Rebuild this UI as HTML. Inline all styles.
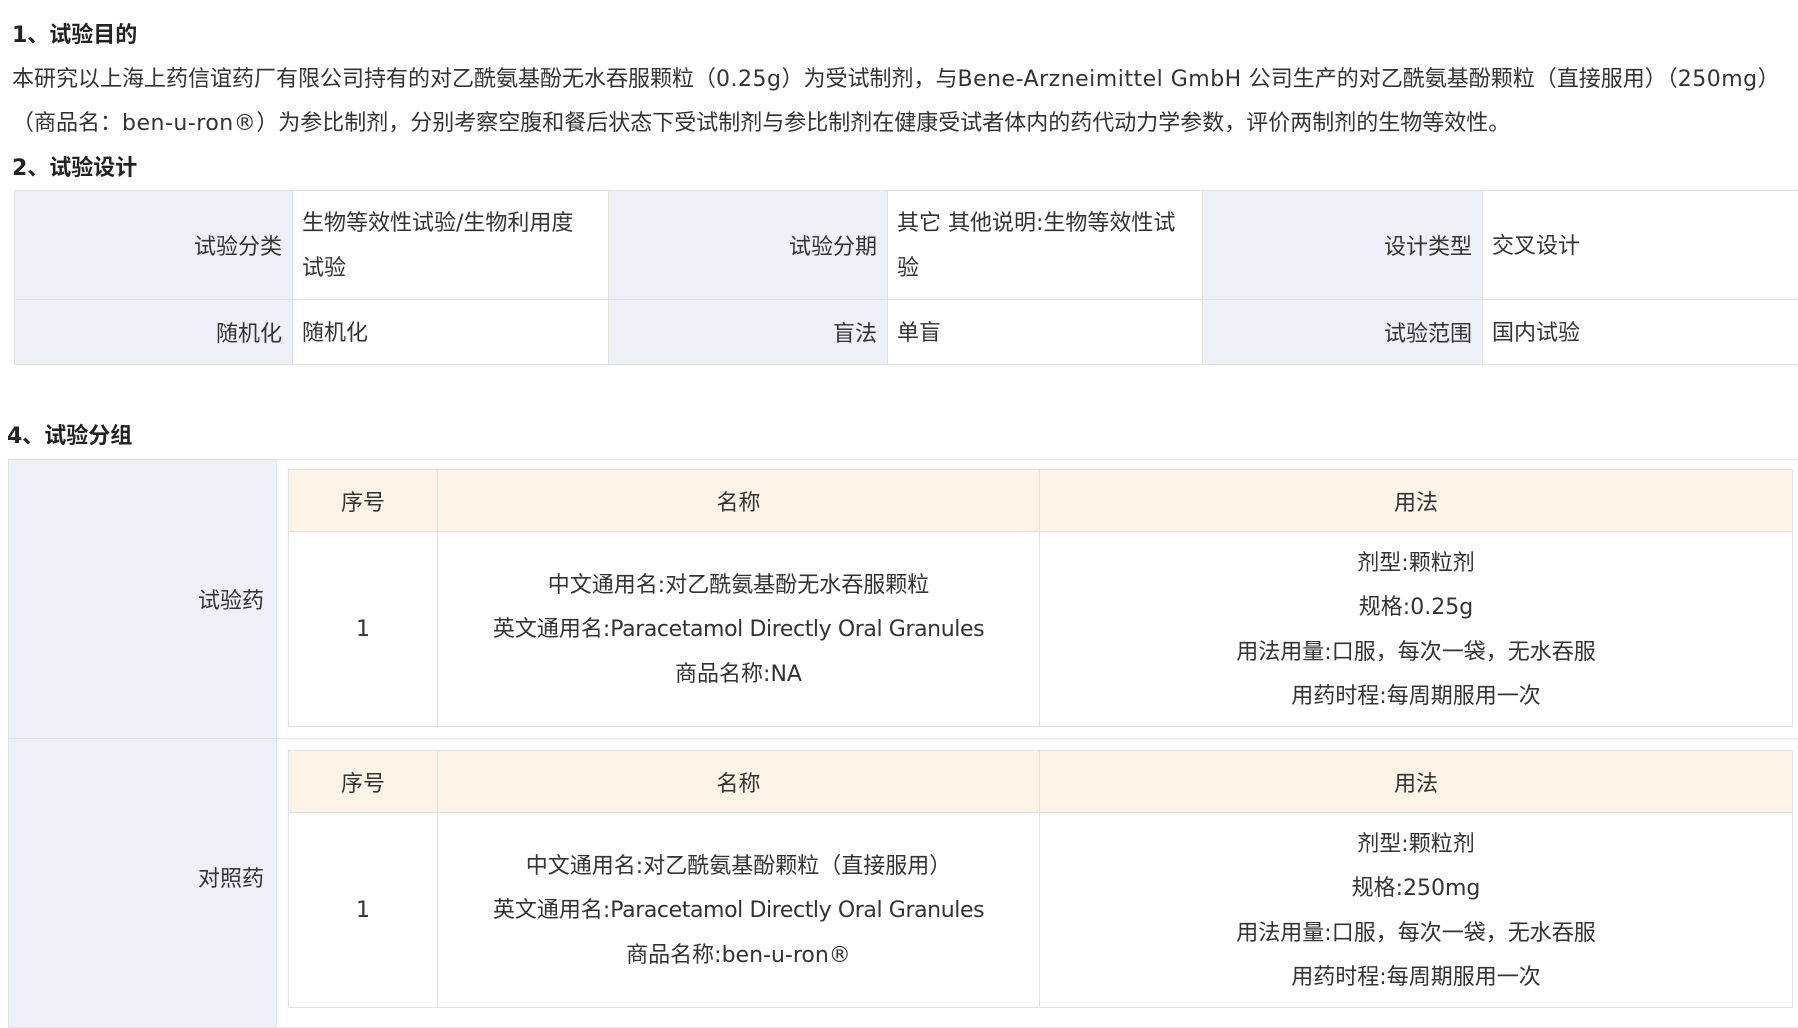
<!DOCTYPE html>
<html><head><meta charset="utf-8"><style>
*{margin:0;padding:0;box-sizing:border-box}
body{width:1798px;height:1018px;background:#fff;font-family:"DejaVu Sans","Noto Sans CJK SC",sans-serif;font-size:22px;color:#333;position:relative;overflow:hidden}
.a{position:absolute}
.h{font-weight:bold;color:#222;font-size:22px;line-height:26px}
.p{white-space:nowrap;line-height:26px}
.l{letter-spacing:0.5px}
.t{letter-spacing:-0.4px}
.c{position:absolute;display:flex;align-items:center;border:1px solid #e2e2e2}
.lab{background:#eef0f8;justify-content:flex-end;padding-right:10px;text-align:right}
.val{background:#fff;padding-left:9px;line-height:45px;padding-top:2px}
.hd{background:#fdf3e6;justify-content:center}
.bd{background:#fff;justify-content:center;text-align:center;line-height:44.5px;padding-top:3px}
</style></head><body>
<div class="a h" style="left:12px;top:23px">1、试验目的</div>
<div class="a p" style="left:12px;top:67px">本研究以上海上药信谊药厂有限公司持有的对乙酰氨基酚无水吞服颗粒（<span class="l">0.25g</span>）为受试制剂，与<span class="l">Bene-Arzneimittel GmbH</span> 公司生产的对乙酰氨基酚颗粒（直接服用）（<span class="l">250mg</span>）</div>
<div class="a p" style="left:12px;top:111px">（商品名：<span class="l">ben-u-ron®</span>）为参比制剂，分别考察空腹和餐后状态下受试制剂与参比制剂在健康受试者体内的药代动力学参数，评价两制剂的生物等效性。</div>
<div class="a h" style="left:12px;top:156px">2、试验设计</div>

<div class="c lab" style="left:14px;top:190px;width:279px;height:110px">试验分类</div>
<div class="c val" style="left:292px;top:190px;width:317px;height:110px">生物等效性试验/生物利用度<br>试验</div>
<div class="c lab" style="left:608px;top:190px;width:280px;height:110px">试验分期</div>
<div class="c val" style="left:887px;top:190px;width:316px;height:110px">其它 其他说明:生物等效性试<br>验</div>
<div class="c lab" style="left:1202px;top:190px;width:281px;height:110px">设计类型</div>
<div class="c val" style="left:1482px;top:190px;width:320px;height:110px">交叉设计</div>
<div class="c lab" style="left:14px;top:299px;width:279px;height:66px">随机化</div>
<div class="c val" style="left:292px;top:299px;width:317px;height:66px">随机化</div>
<div class="c lab" style="left:608px;top:299px;width:280px;height:66px">盲法</div>
<div class="c val" style="left:887px;top:299px;width:316px;height:66px">单盲</div>
<div class="c lab" style="left:1202px;top:299px;width:281px;height:66px">试验范围</div>
<div class="c val" style="left:1482px;top:299px;width:320px;height:66px">国内试验</div>

<div class="a h" style="left:7px;top:424px">4、试验分组</div>

<div class="c lab" style="left:8px;top:459px;width:269px;height:280px;padding-right:12px">试验药</div>
<div class="c" style="left:276px;top:459px;width:1526px;height:280px;border-color:#e8e8e8"></div>
<div class="c hd" style="left:288px;top:469px;width:150px;height:63px">序号</div>
<div class="c hd" style="left:437px;top:469px;width:603px;height:63px">名称</div>
<div class="c hd" style="left:1039px;top:469px;width:754px;height:63px">用法</div>
<div class="c bd" style="left:288px;top:531px;width:150px;height:196px">1</div>
<div class="c bd" style="left:437px;top:531px;width:603px;height:196px"><div>中文通用名:对乙酰氨基酚无水吞服颗粒<br>英文通用名:<span class="t">Paracetamol Directly Oral Granules</span><br>商品名称:NA</div></div>
<div class="c bd" style="left:1039px;top:531px;width:754px;height:196px">剂型:颗粒剂<br>规格:0.25g<br>用法用量:口服，每次一袋，无水吞服<br>用药时程:每周期服用一次</div>

<div class="c lab" style="left:8px;top:738px;width:269px;height:290px;padding-right:12px;padding-bottom:12px">对照药</div>
<div class="c" style="left:276px;top:738px;width:1526px;height:290px;border-color:#e8e8e8"></div>
<div class="c hd" style="left:288px;top:750px;width:150px;height:63px">序号</div>
<div class="c hd" style="left:437px;top:750px;width:603px;height:63px">名称</div>
<div class="c hd" style="left:1039px;top:750px;width:754px;height:63px">用法</div>
<div class="c bd" style="left:288px;top:812px;width:150px;height:196px">1</div>
<div class="c bd" style="left:437px;top:812px;width:603px;height:196px"><div>中文通用名:对乙酰氨基酚颗粒（直接服用）<br>英文通用名:<span class="t">Paracetamol Directly Oral Granules</span><br>商品名称:ben-u-ron®</div></div>
<div class="c bd" style="left:1039px;top:812px;width:754px;height:196px">剂型:颗粒剂<br>规格:250mg<br>用法用量:口服，每次一袋，无水吞服<br>用药时程:每周期服用一次</div>
</body></html>
